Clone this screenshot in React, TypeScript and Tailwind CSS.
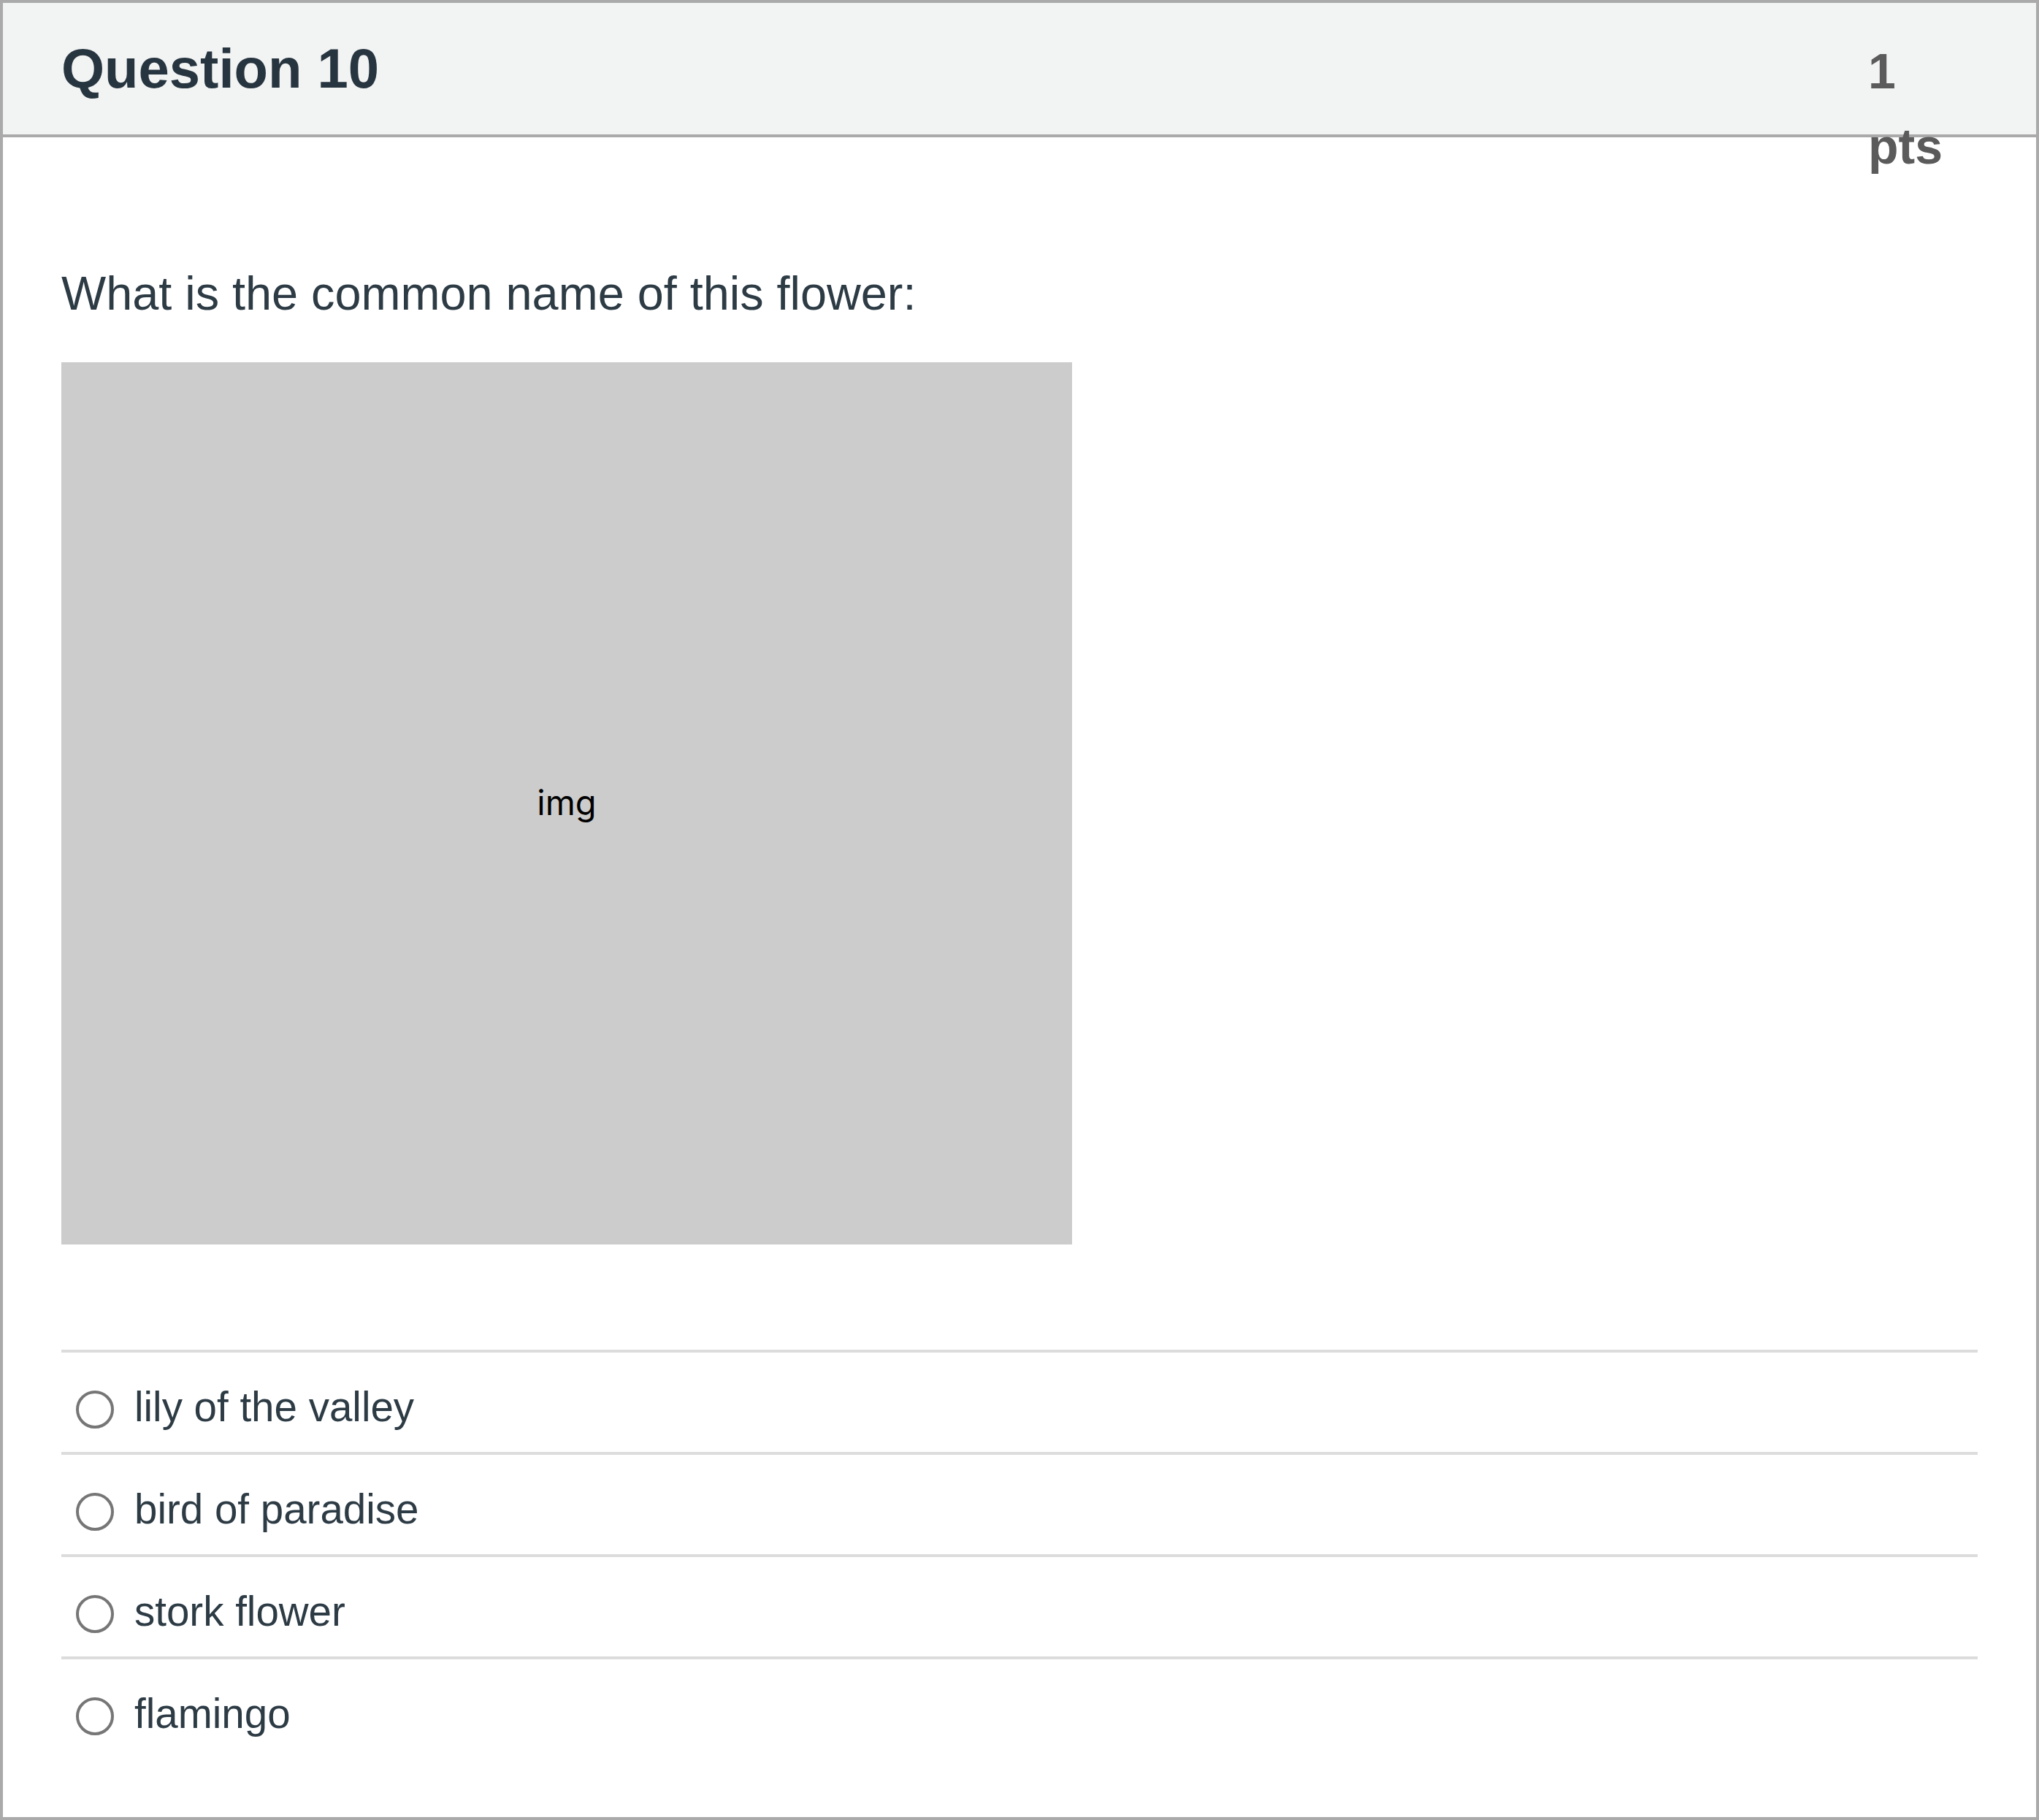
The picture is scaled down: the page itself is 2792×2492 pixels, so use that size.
const options = ["lily of the valley", "bird of paradise", "stork flower", "flamingo"];

const OptionRow = ({ label }: { label: string }) => {
  return (
    <label className="flex items-start h-[140px] border-t-4 border-[#dcdcdc]">
      <span className="mt-[52px] ml-[20px] w-[52px] h-[52px] shrink-0 rounded-full border-4 border-[#767676] bg-white" />
      <span className="mt-[44px] ml-[28px] text-[56.5px] leading-[62px] text-[#2d3b45]">{label}</span>
    </label>
  );
};

export default function App() {
  return (
    <div className="w-[2792px] h-[2492px] bg-white [font-family:'Liberation_Sans',Arial,sans-serif]">
      <div className="flex flex-col w-full h-full border-4 border-[#aaaaaa]">
        <div className="flex justify-between items-start h-[184px] shrink-0 bg-[#f2f3f3] border-b-4 border-[#aaaaaa] pl-[80px]">
          <h2 className="mt-[52px] text-[76px] leading-[76px] font-bold text-[#273540]">Question 10</h2>
          <div className="relative mt-[42px] mr-[110px] w-[120px] text-[68px] leading-[103px] font-bold text-[#5b5b5b]">
            1 pts
          </div>
        </div>

        <div className="flex flex-col px-[80px] pt-[166px] pb-[80px]">
          <p className="text-[64.8px] leading-[96px] text-[#2d3b45]">What is the common name of this flower:</p>

          <div className="mt-[46px] flex items-center justify-center w-[1384px] h-[1208px] bg-[#cccccc]">
            <span className="-mt-[2px] text-[47px] text-black [font-family:Inter,sans-serif]">img</span>
          </div>

          <div className="mt-[144px] flex flex-col">
            {options.map((o) => (
              <OptionRow key={o} label={o} />
            ))}
          </div>
        </div>
      </div>
    </div>
  );
}
